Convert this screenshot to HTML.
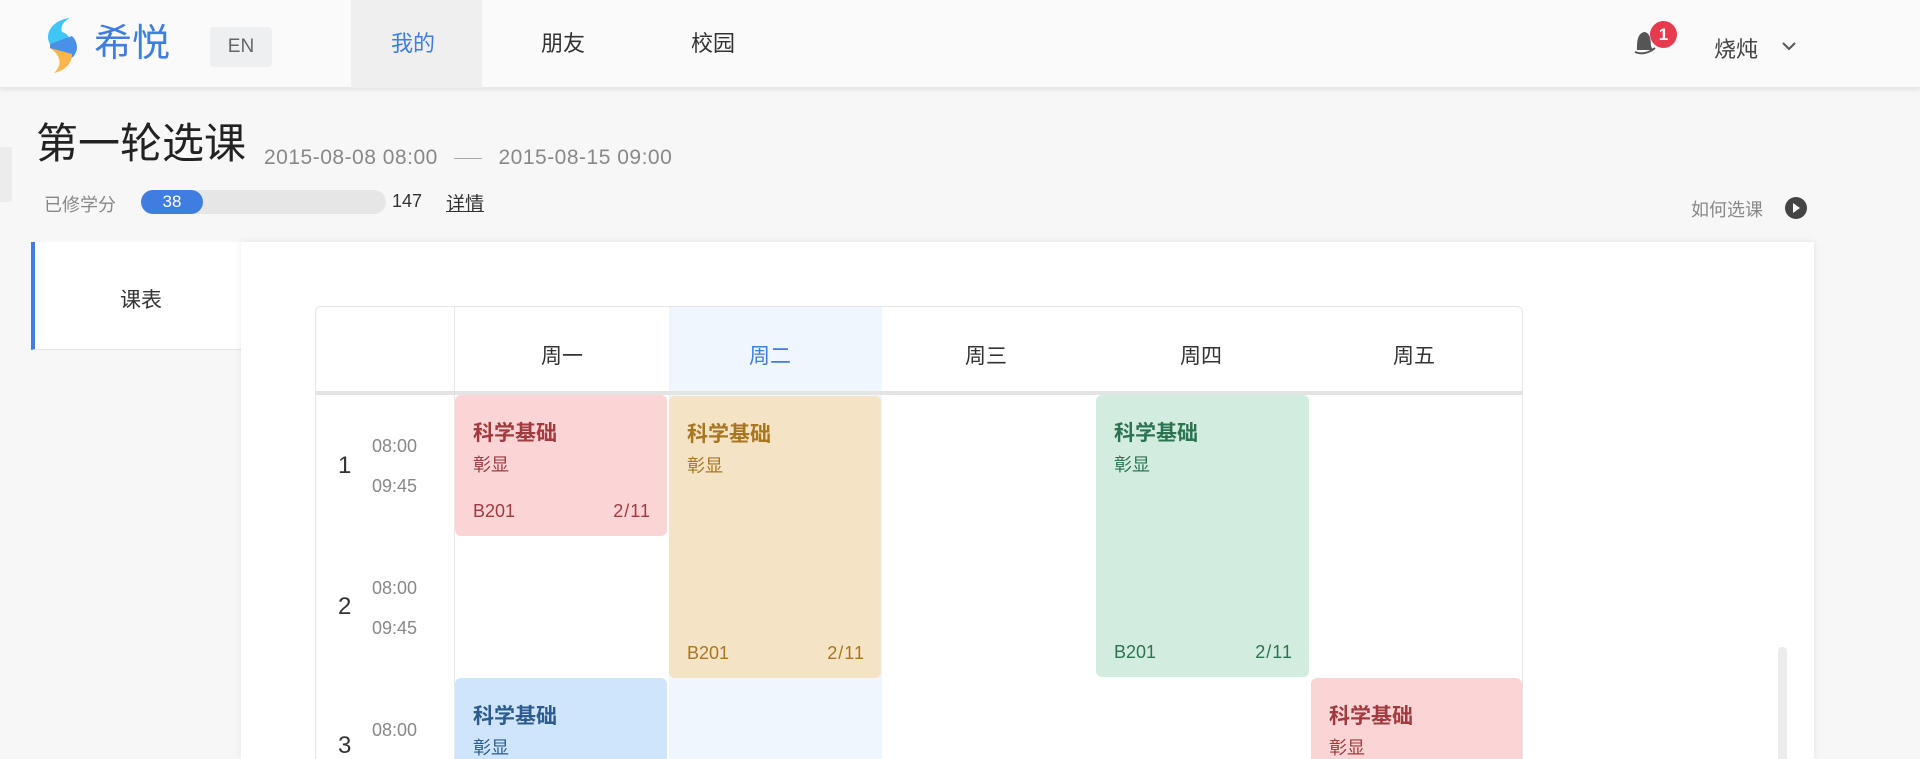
<!DOCTYPE html>
<html style="overflow:hidden;height:759px"><head><meta charset="utf-8"><style>
*{margin:0;padding:0;box-sizing:border-box}
body{width:1920px;height:759px;overflow:hidden;background:#f7f7f7;font-family:"Liberation Sans","Noto Sans CJK SC",sans-serif;position:relative;color:#333}
.a{position:absolute}
.hdr{left:0;top:0;width:1920px;height:88px;background:#fafafa;box-shadow:0 2px 4px rgba(0,0,0,.08);border-bottom:1px solid #e8e8e8}
.nav{font-size:22px;top:30px;line-height:28px}
.blk{position:absolute;border-radius:6px;padding:0 18px;overflow:hidden}
.blk .t{position:absolute;left:18px;top:22px;font-size:21px;font-weight:bold}
.blk .n{position:absolute;left:18px;top:56px;font-size:18px}
.blk .r{position:absolute;left:18px;bottom:14px;font-size:18px}
.blk .c{position:absolute;right:16px;bottom:14px;font-size:18px;letter-spacing:1px}
.tm{font-size:18px;color:#888;left:372px}
.rn{font-size:24px;color:#333;left:338px}
#wrap{position:absolute;left:0;top:0;width:1920px;height:759px;overflow:hidden}
</style></head><body><div id="wrap">
<div class="a hdr"></div>
<svg class="a" style="left:42px;top:16px" width="40" height="58" viewBox="0 0 40 58">
<path d="M28 2 C10 4 2 18 8 28 L24 36 C32 28 28 18 20 16 C18 10 22 5 28 2Z" fill="#3ec6f5"/>
<path d="M8 28 L30 20 C38 28 36 40 26 44 L8 32Z" fill="#4a8fe8"/>
<path d="M8 32 L30 38 C30 48 22 55 12 57 C20 50 20 40 8 32Z" fill="#fbb54a"/>
</svg>
<div class="a" style="left:94px;top:22px;font-size:38px;color:#3f7de0;line-height:44px">希悦</div>
<div class="a" style="left:210px;top:27px;width:62px;height:40px;background:#eeeff1;border-radius:4px;font-size:19px;color:#666;text-align:center;line-height:40px">EN</div>
<div class="a" style="left:351px;top:0;width:131px;height:88px;background:#efefef"></div>
<div class="a nav" style="left:391px;color:#3f7de0">我的</div>
<div class="a nav" style="left:541px">朋友</div>
<div class="a nav" style="left:691px">校园</div>
<svg class="a" style="left:1633px;top:28px" width="24" height="28" viewBox="0 0 24 28"><path d="M4 22 C4 14 4 6 11 4 C16 4 18 10 18 18 L20 22Z" fill="#555"/><path d="M2 24 Q12 28 22 20" stroke="#555" stroke-width="2" fill="none"/></svg>
<div class="a" style="left:1650px;top:21px;width:27px;height:27px;border-radius:50%;background:#e83a4e;color:#fff;font-size:17px;font-weight:bold;text-align:center;line-height:27px">1</div>
<div class="a" style="left:1714px;top:32px;font-size:22px;color:#444">烧炖</div>
<svg class="a" style="left:1781px;top:41px" width="16" height="10"><path d="M2 2 L8 8 L14 2" stroke="#555" stroke-width="2" fill="none"/></svg>

<div class="a" style="left:0;top:147px;width:12px;height:55px;background:#ececec"></div>
<div class="a" style="left:36px;top:119px;font-size:42px;color:#222;line-height:50px">第一轮选课</div>
<div class="a" style="left:264px;top:146px;font-size:21px;color:#888;letter-spacing:0.5px">2015-08-08 08:00 <span style="display:inline-block;width:28px;height:1px;background:#aaa;vertical-align:middle;margin:0 10px"></span> 2015-08-15 09:00</div>
<div class="a" style="left:44px;top:191px;font-size:18px;color:#888">已修学分</div>
<div class="a" style="left:141px;top:190px;width:245px;height:24px;border-radius:12px;background:#e6e6e6"></div>
<div class="a" style="left:141px;top:190px;width:62px;height:24px;border-radius:12px;background:#3f7de0;color:#fff;font-size:17px;text-align:center;line-height:24px">38</div>
<div class="a" style="left:392px;top:191px;font-size:18px;color:#333">147</div>
<div class="a" style="left:446px;top:189px;font-size:19px;color:#333;text-decoration:underline">详情</div>
<div class="a" style="left:1691px;top:196px;font-size:18px;color:#888">如何选课</div>
<div class="a" style="left:1785px;top:197px;width:22px;height:22px;border-radius:50%;background:#444"></div>
<svg class="a" style="left:1792px;top:202px" width="10" height="12"><path d="M1 1 L8 6 L1 11Z" fill="#fff"/></svg>

<div class="a" style="left:31px;top:242px;width:210px;height:108px;background:#fff;border-left:4px solid #3f7de0;border-bottom:1px solid #e5e5e5"></div>
<div class="a" style="left:120px;top:284px;font-size:21px;color:#333">课表</div>
<div class="a" style="left:241px;top:242px;width:1573px;height:517px;background:#fff;box-shadow:0 0 8px rgba(0,0,0,.08)"></div>

<div class="a" style="left:315px;top:306px;width:1208px;height:453px;border:1px solid #e6e6e6;border-bottom:none;border-radius:6px 6px 0 0"></div>
<div class="a" style="left:669px;top:307px;width:213px;height:452px;background:#f0f6fe"></div>
<div class="a" style="left:454px;top:307px;width:1px;height:452px;background:#e8e8e8"></div>
<div class="a" style="left:316px;top:391px;width:1206px;height:4px;background:#e4e4e4"></div>
<div class="a" style="left:541px;top:340px;font-size:21px;color:#333">周一</div>
<div class="a" style="left:749px;top:340px;font-size:21px;color:#3f7de0">周二</div>
<div class="a" style="left:965px;top:340px;font-size:21px;color:#333">周三</div>
<div class="a" style="left:1180px;top:340px;font-size:21px;color:#333">周四</div>
<div class="a" style="left:1393px;top:340px;font-size:21px;color:#333">周五</div>

<div class="a rn" style="top:452px">1</div><div class="a tm" style="top:436px">08:00</div><div class="a tm" style="top:476px">09:45</div>
<div class="a rn" style="top:593px">2</div><div class="a tm" style="top:578px">08:00</div><div class="a tm" style="top:618px">09:45</div>
<div class="a rn" style="top:733px;line-height:26px">3</div><div class="a tm" style="top:720px">08:00</div>

<div class="blk" style="left:455px;top:395px;width:212px;height:141px;background:#fbd5d6;color:#a23a3e"><div class="t">科学基础</div><div class="n">彰显</div><div class="r">B201</div><div class="c">2/11</div></div>
<div class="blk" style="left:669px;top:396px;width:212px;height:282px;background:#f4e3c5;color:#a8761f"><div class="t">科学基础</div><div class="n">彰显</div><div class="r">B201</div><div class="c">2/11</div></div>
<div class="blk" style="left:1096px;top:395px;width:213px;height:282px;background:#d2ecdf;color:#2c7450"><div class="t">科学基础</div><div class="n">彰显</div><div class="r">B201</div><div class="c">2/11</div></div>
<div class="blk" style="left:455px;top:678px;width:212px;height:81px;border-radius:6px 6px 0 0;background:#cfe5fb;color:#2d5b8f"><div class="t">科学基础</div><div class="n">彰显</div></div>
<div class="blk" style="left:1311px;top:678px;width:211px;height:81px;border-radius:6px 6px 0 0;background:#fbd5d6;color:#a23a3e"><div class="t">科学基础</div><div class="n">彰显</div></div>
<div class="a" style="left:1778px;top:647px;width:9px;height:112px;border-radius:4px 4px 0 0;background:#ececec"></div>
</div></body></html>
